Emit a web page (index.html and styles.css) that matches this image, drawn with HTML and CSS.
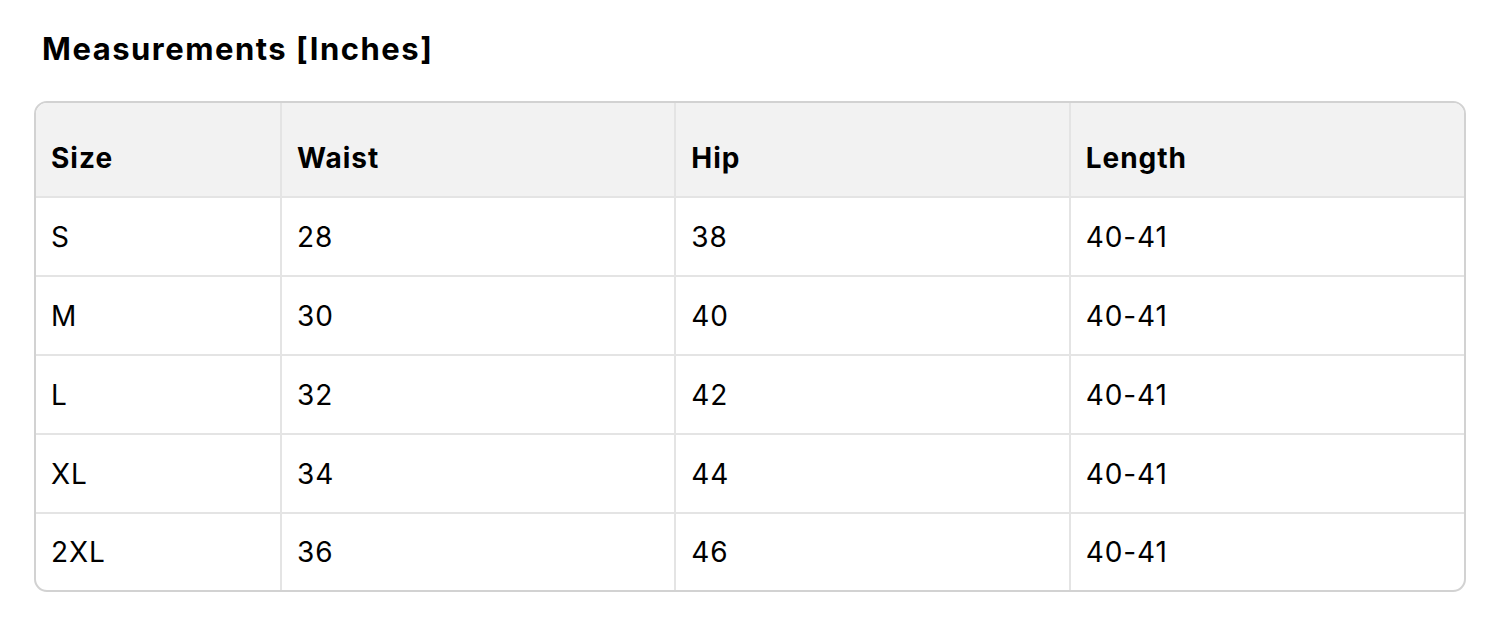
FILE: index.html
```html
<!DOCTYPE html>
<html lang="en">
<head>
<meta charset="utf-8">
<title>Measurements</title>
<link rel="stylesheet" href="styles.css">
</head>
<body>
<main class="page">
  <h2 class="title">Measurements [Inches]</h2>
  <div class="table-wrap">
    <table class="size-table">
      <colgroup>
        <col class="col-size">
        <col class="col-wide">
        <col class="col-wide">
        <col class="col-wide">
      </colgroup>
      <thead>
        <tr><th>Size</th><th>Waist</th><th>Hip</th><th>Length</th></tr>
      </thead>
      <tbody>
        <tr><td>S</td><td>28</td><td>38</td><td>40-41</td></tr>
        <tr><td>M</td><td>30</td><td>40</td><td>40-41</td></tr>
        <tr><td>L</td><td>32</td><td>42</td><td>40-41</td></tr>
        <tr><td>XL</td><td>34</td><td>44</td><td>40-41</td></tr>
        <tr class="last-row"><td>2XL</td><td>36</td><td>46</td><td>40-41</td></tr>
      </tbody>
    </table>
  </div>
</main>
</body>
</html>
```

FILE: styles.css
```css
* { box-sizing: border-box; }
html, body { margin: 0; background: #ffffff; }
body {
  font-family: Inter, "Liberation Sans", Arial, sans-serif;
  color: #000000;
}
.page {
  padding: 31px 34px 0 34px;
}
.title {
  margin: 0 0 34px 8px;
  font-size: 31px;
  font-weight: 700;
  line-height: 36px;
  letter-spacing: 1.5px;
}
.table-wrap {
  border: 2px solid #d2d2d2;
  border-radius: 13px;
  overflow: hidden;
}
.size-table {
  width: 100%;
  border-collapse: collapse;
  table-layout: fixed;
}
.col-size { width: 245px; }
.size-table th,
.size-table td {
  text-align: left;
  padding: 0 0 0 15px;
  border-left: 2px solid #e4e4e4;
  border-top: 2px solid #e4e4e4;
  font-size: 28px;
  line-height: normal;
  letter-spacing: 0.9px;
}
.size-table th:first-child,
.size-table td:first-child { border-left: none; }
.size-table thead th {
  border-top: none;
  background: #f2f2f2;
  font-weight: 700;
  height: 94px;
  padding-top: 16px;
  letter-spacing: 1px;
}
.size-table td {
  font-weight: 400;
  height: 79px;
}
.size-table .last-row td { height: 77px; }
```
